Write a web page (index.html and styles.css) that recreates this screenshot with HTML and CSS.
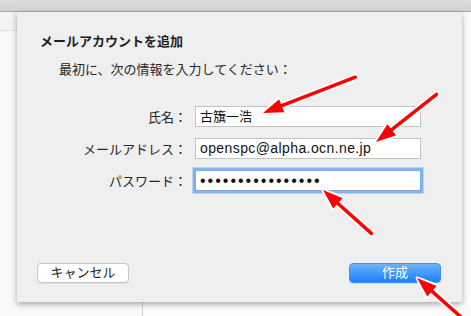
FILE: index.html
```html
<!DOCTYPE html>
<html lang="ja">
<head>
    <meta charset="UTF-8">
    <meta name="viewport" content="width=device-width, initial-scale=1.0">
    <title>メールアカウントを追加</title>
    <link rel="stylesheet" href="styles.css">
</head>
<body>
    <div class="window">
        <div class="toolbar"></div>
        <div class="content">
            <div class="sidebar">
                <div class="sidebar-head"></div>
            </div>
            <div class="main"></div>
        </div>

        <div class="sheet">
            <h1 class="title">メールアカウントを追加</h1>
            <p class="intro">最初に、次の情報を入力してください：</p>

            <div class="form">
                <label class="label">氏名：</label>
                <div class="field">古籏一浩</div>

                <label class="label">メールアドレス：</label>
                <div class="field latin">openspc@alpha.ocn.ne.jp</div>

                <label class="label">パスワード：</label>
                <div class="field focused"><span class="dots">••••••••••••••••</span></div>
            </div>

            <div class="buttons">
                <button class="btn">キャンセル</button>
                <button class="btn primary">作成</button>
            </div>
        </div>

        <!-- annotation arrows -->
        <svg class="arrows" width="471" height="316" viewBox="0 0 471 316">
            <g transform="translate(263,113) rotate(-21.2)">
                <line x1="16" y1="0" x2="99" y2="0" stroke="#fff" stroke-width="7" stroke-linecap="round"/>
                <polygon points="0,0 20,-8 20,8" fill="#fff" stroke="#fff" stroke-width="3" stroke-linejoin="round"/>
                <line x1="16" y1="0" x2="99" y2="0" stroke="#f00" stroke-width="3.5" stroke-linecap="round"/>
                <polygon points="0,0 20,-7 20,7" fill="#f00"/>
            </g>
            <g transform="translate(376,142) rotate(-38.2)">
                <line x1="16" y1="0" x2="77" y2="0" stroke="#fff" stroke-width="7" stroke-linecap="round"/>
                <polygon points="0,0 20,-8 20,8" fill="#fff" stroke="#fff" stroke-width="3" stroke-linejoin="round"/>
                <line x1="16" y1="0" x2="77" y2="0" stroke="#f00" stroke-width="3.5" stroke-linecap="round"/>
                <polygon points="0,0 20,-7 20,7" fill="#f00"/>
            </g>
            <g transform="translate(323,190) rotate(41.9)">
                <line x1="16" y1="0" x2="65" y2="0" stroke="#fff" stroke-width="7" stroke-linecap="round"/>
                <polygon points="0,0 20,-8 20,8" fill="#fff" stroke="#fff" stroke-width="3" stroke-linejoin="round"/>
                <line x1="16" y1="0" x2="65" y2="0" stroke="#f00" stroke-width="3.5" stroke-linecap="round"/>
                <polygon points="0,0 20,-7 20,7" fill="#f00"/>
            </g>
            <g transform="translate(417,278) rotate(41.6)">
                <line x1="16" y1="0" x2="62" y2="0" stroke="#fff" stroke-width="7" stroke-linecap="round"/>
                <polygon points="0,0 20,-8 20,8" fill="#fff" stroke="#fff" stroke-width="3" stroke-linejoin="round"/>
                <line x1="16" y1="0" x2="62" y2="0" stroke="#f00" stroke-width="3.5" stroke-linecap="round"/>
                <polygon points="0,0 20,-7 20,7" fill="#f00"/>
            </g>
        </svg>
    </div>
</body>
</html>
```

FILE: styles.css
```css
body {
    margin: 0;
    font-family: "Liberation Sans", "Noto Sans CJK JP", sans-serif;
    color: #222;
}
.window {
    position: relative;
    width: 471px;
    height: 316px;
    overflow: hidden;
    background-color: #f7f7f7;
}
.toolbar {
    height: 11px;
    background: linear-gradient(#dcdcdc, #d2d2d2);
    border-bottom: 1px solid #a8a8a8;
}
.content {
    display: flex;
    height: 304px;
}
.sidebar {
    width: 142px;
    border-right: 1px solid #d0d0d0;
    background-color: #f9f9f9;
}
.sidebar-head {
    height: 18px;
    border-bottom: 1px solid #dedede;
    background-color: #f3f3f3;
}
.main {
    flex-grow: 1;
    background-color: #fbfbfb;
}
.sheet {
    position: absolute;
    left: 17px;
    top: 12px;
    width: 445px;
    height: 290px;
    box-sizing: border-box;
    padding: 22px 21px 19px 20px;
    display: flex;
    flex-direction: column;
    background-color: #efefef;
    box-shadow: 0 2px 6px rgba(0,0,0,0.35);
}
.title {
    margin: 0 0 0 3px;
    font-size: 13px;
    line-height: 16px;
    font-weight: bold;
    color: #1e1e1e;
}
.intro {
    margin: 12px 0 0 22px;
    font-size: 13px;
    line-height: 16px;
    color: #262626;
}
.form {
    display: grid;
    grid-template-columns: 150px 226px;
    column-gap: 8px;
    row-gap: 11px;
    margin-top: 28px;
    align-items: center;
}
.label {
    text-align: right;
    font-size: 13px;
    color: #262626;
}
.field {
    height: 21px;
    box-sizing: border-box;
    border: 1px solid #c3c3c3;
    background-color: white;
    padding: 0 4px;
    font-size: 13px;
    line-height: 19px;
    color: #111;
}
.field.latin {
    font-size: 14px;
    letter-spacing: 0.4px;
}
.field.focused {
    box-shadow: 0 0 0 2.5px #85b5ef;
    border-color: #7ea9e0;
}
.dots {
    font-size: 16px;
    letter-spacing: 2px;
}
.buttons {
    display: flex;
    justify-content: space-between;
    margin-top: auto;
}
.btn {
    width: 92px;
    height: 20px;
    padding: 0;
    border: 1px solid #c6c6c6;
    border-radius: 4px;
    background-color: white;
    font-family: "Liberation Sans", "Noto Sans CJK JP", sans-serif;
    font-size: 13px;
    line-height: 18px;
    color: #1e1e1e;
    box-shadow: 0 1px 0 rgba(0,0,0,0.06);
}
.btn.primary {
    border-color: #3c8ff2;
    background: linear-gradient(#6cb3fa, #1a81fa);
    color: white;
}
.arrows {
    position: absolute;
    left: 0;
    top: 0;
}
```
